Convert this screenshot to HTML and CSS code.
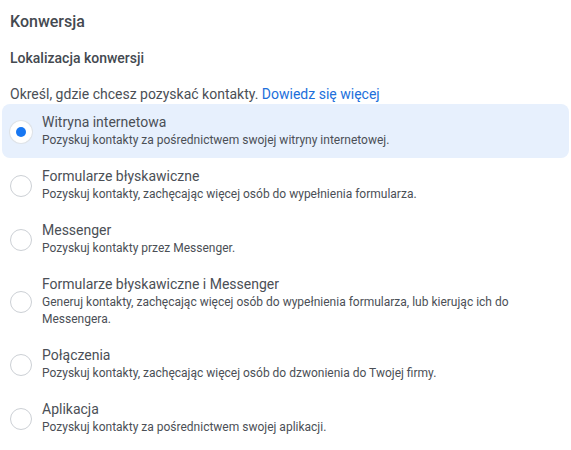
FILE: index.html
```html
<!DOCTYPE html>
<html lang="pl">
<head>
<meta charset="utf-8">
<link rel="stylesheet" href="styles.css">
</head>
<body>
<div class="panel">
  <h1 class="title">Konwersja</h1>
  <h2 class="subtitle">Lokalizacja konwersji</h2>
  <p class="intro">Określ, gdzie chcesz pozyskać kontakty. <a class="link" href="#">Dowiedz się więcej</a></p>
  <div class="options">
    <div class="option selected">
      <span class="radio"><span class="dot"></span></span>
      <div class="text">
        <div class="opt-title">Witryna internetowa</div>
        <div class="opt-desc">Pozyskuj kontakty za pośrednictwem swojej witryny internetowej.</div>
      </div>
    </div>
    <div class="option">
      <span class="radio"></span>
      <div class="text">
        <div class="opt-title">Formularze błyskawiczne</div>
        <div class="opt-desc">Pozyskuj kontakty, zachęcając więcej osób do wypełnienia formularza.</div>
      </div>
    </div>
    <div class="option">
      <span class="radio"></span>
      <div class="text">
        <div class="opt-title">Messenger</div>
        <div class="opt-desc">Pozyskuj kontakty przez Messenger.</div>
      </div>
    </div>
    <div class="option">
      <span class="radio"></span>
      <div class="text">
        <div class="opt-title">Formularze błyskawiczne i Messenger</div>
        <div class="opt-desc">Generuj kontakty, zachęcając więcej osób do wypełnienia formularza, lub kierując ich do Messengera.</div>
      </div>
    </div>
    <div class="option">
      <span class="radio"></span>
      <div class="text">
        <div class="opt-title">Połączenia</div>
        <div class="opt-desc">Pozyskuj kontakty, zachęcając więcej osób do dzwonienia do Twojej firmy.</div>
      </div>
    </div>
    <div class="option">
      <span class="radio"></span>
      <div class="text">
        <div class="opt-title">Aplikacja</div>
        <div class="opt-desc">Pozyskuj kontakty za pośrednictwem swojej aplikacji.</div>
      </div>
    </div>
  </div>
</div>
</body>
</html>
```
FILE: styles.css
```css
html, body {
  margin: 0;
  padding: 0;
  background: #ffffff;
}
body {
  font-family: Roboto, "Noto Sans", Arial, sans-serif;
  color: #4b4f56;
}
.panel {
  padding: 12px 2px 0 2px;
}
.title {
  margin: 0 0 16px 8px;
  font-size: 16px;
  line-height: 20px;
  font-weight: 500;
  color: #444950;
}
.subtitle {
  margin: 0 0 16px 8px;
  font-size: 14px;
  line-height: 20px;
  font-weight: 500;
  color: #444950;
}
.intro {
  margin: 0 0 0 8px;
  font-size: 14px;
  line-height: 20px;
  color: #4b4f56;
}
.link {
  color: #216fdb;
  text-decoration: none;
}
.options {
  display: flex;
  flex-direction: column;
}
.option {
  display: flex;
  align-items: center;
  gap: 10px;
  padding: 10px 8px 9px 8px;
  border-radius: 8px;
}
.option.selected {
  background: #e7f0fd;
}
.radio {
  flex: none;
  width: 22px;
  height: 22px;
  box-sizing: border-box;
  border: 1px solid #ccd0d5;
  border-radius: 50%;
  background: #ffffff;
  display: flex;
  align-items: center;
  justify-content: center;
}
.selected .radio {
  border-color: #ffffff;
  box-shadow: 0 0 0 1px #dfe3e8;
}
.dot {
  width: 10px;
  height: 10px;
  border-radius: 50%;
  background: #1877f2;
}
.text {
  display: flex;
  flex-direction: column;
}
.opt-title {
  font-size: 14px;
  line-height: 17px;
  color: #4b4f56;
}
.opt-desc {
  margin-top: 1px;
  font-size: 12px;
  line-height: 17px;
  color: #4b4f56;
}
```
